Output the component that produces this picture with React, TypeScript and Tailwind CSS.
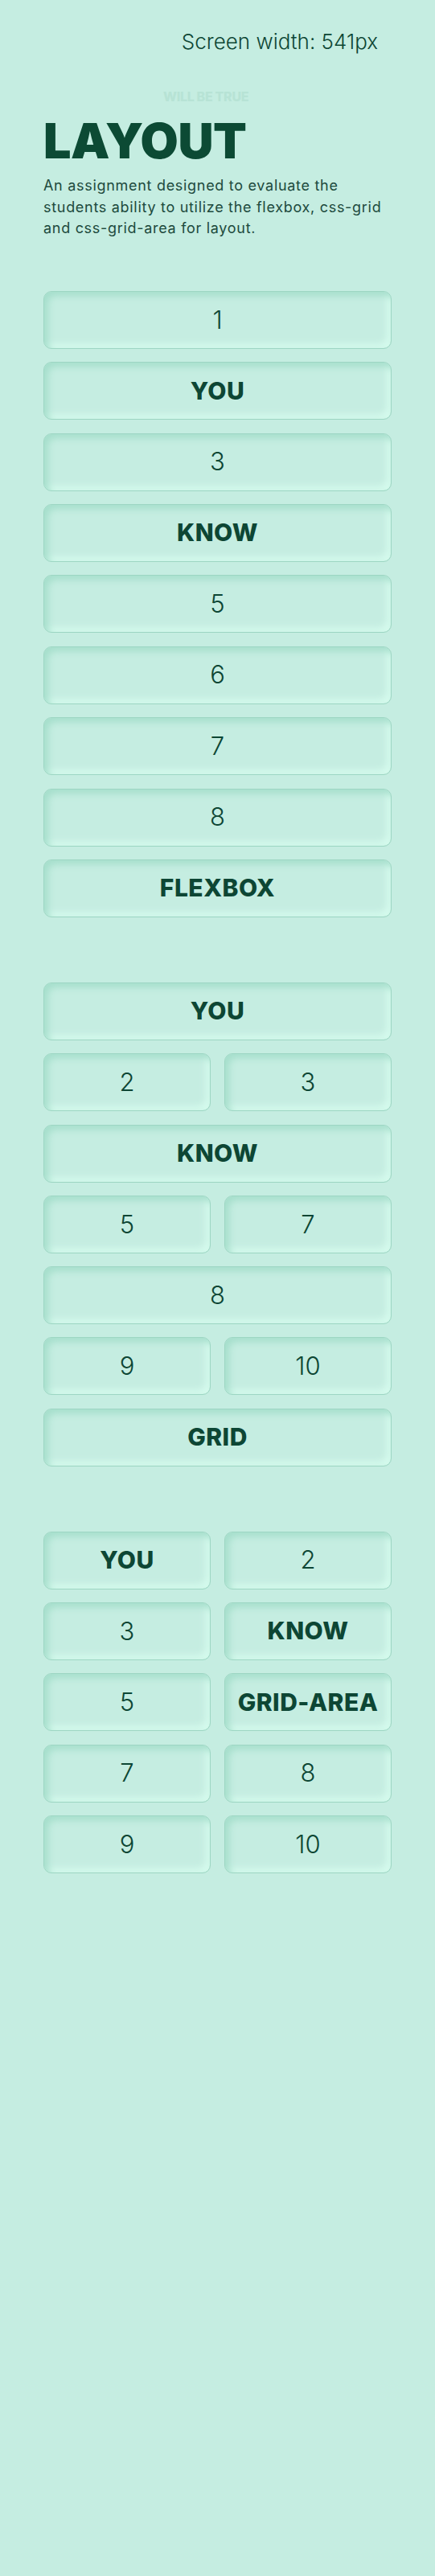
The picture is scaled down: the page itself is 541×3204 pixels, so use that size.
const flexItems = ['1', 'YOU', '3', 'KNOW', '5', '6', '7', '8', 'FLEXBOX'];

const gridItems: { label: string; span?: boolean }[] = [
  { label: 'YOU', span: true },
  { label: '2' },
  { label: '3' },
  { label: 'KNOW', span: true },
  { label: '5' },
  { label: '7' },
  { label: '8', span: true },
  { label: '9' },
  { label: '10' },
  { label: 'GRID', span: true },
];

const areaItems = ['YOU', '2', '3', 'KNOW', '5', 'GRID-AREA', '7', '8', '9', '10'];

function Box({ label, className = '' }: { label: string; className?: string }) {
  const isWord = /[A-Z]/.test(label);
  return (
    <div
      className={`h-[72px] flex items-center justify-center rounded-[10px] border border-[#9dd6c3] bg-[#c5ede1] shadow-[inset_5px_5px_8px_#a6dfcc,inset_-5px_-5px_8px_#d6fbee] text-[#0d4634] ${
        isWord ? 'text-[30px] font-extrabold tracking-[0.5px]' : 'text-[31px] font-light'
      } ${className}`}
    >
      {label}
    </div>
  );
}

export default function App() {
  return (
    <div
      className="min-h-[3204px] bg-[#c5ede1] px-[54px] text-[#0d4634]"
      style={{ fontFamily: 'Inter, "Noto Sans", sans-serif' }}
    >
      {/* Header */}
      <div className="pt-[36px] pr-[17px] text-right text-[26px] font-light leading-[32px]">
        Screen width: 541px
      </div>

      <div className="mt-[42px] ml-[149px] text-[16px] font-extrabold leading-[20px] tracking-[-0.3px] text-[#b7e3d5]">
        WILL BE TRUE
      </div>

      <h1 className="mt-[10px] text-[61px] font-black leading-[70px] tracking-[-0.5px] text-[#0c4a34]">
        LAYOUT
      </h1>

      <p className="mt-[8px] max-w-[425px] text-[18px] leading-[26.6px] tracking-[0.7px] text-[#1d4a3d]">
        An assignment designed to evaluate the students ability to utilize the flexbox, css-grid and
        css-grid-area for layout.
      </p>

      {/* Flexbox */}
      <div className="mt-[64px] flex flex-col gap-[16.4px]">
        {flexItems.map((l, i) => (
          <Box key={i} label={l} />
        ))}
      </div>

      {/* Grid */}
      <div className="mt-[81px] grid grid-cols-2 gap-x-[17px] gap-y-[16.3px]">
        {gridItems.map((it, i) => (
          <Box key={i} label={it.label} className={it.span ? 'col-span-2' : ''} />
        ))}
      </div>

      {/* Grid area */}
      <div className="mt-[81px] grid grid-cols-2 gap-x-[17px] gap-y-[16.3px]">
        {areaItems.map((l, i) => (
          <Box key={i} label={l} />
        ))}
      </div>
    </div>
  );
}
